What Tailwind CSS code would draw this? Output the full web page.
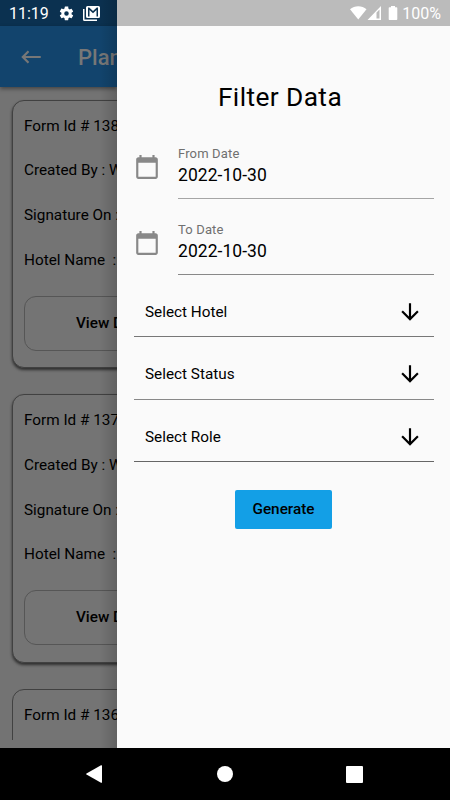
<!DOCTYPE html>
<html lang="en">
<head>
<meta charset="utf-8">
<title>Filter Data</title>
<script src="https://cdn.jsdelivr.net/npm/@tailwindcss/browser@4"></script>
</head>
<body class="bg-black">
<svg class="hidden">
  <symbol id="calendar" viewBox="0 0 24 24"><path fill="currentColor" d="M20 3h-1V1h-2v2H7V1H5v2H4c-1.1 0-2 .9-2 2v16c0 1.1.9 2 2 2h16c1.1 0 2-.9 2-2V5c0-1.1-.9-2-2-2zm0 18H4V8h16v13z"/></symbol>
  <symbol id="down" viewBox="0 0 24 24"><path fill="currentColor" d="M20 12l-1.41-1.41L13 16.17V4h-2v12.17l-5.58-5.59L4 12l8 8 8-8z"/></symbol>
</svg>
<div class="flex h-[800px] w-[450px] flex-col overflow-hidden bg-black font-[Roboto,sans-serif] text-black">
  <div class="flex h-[748px]">
    <!-- Page behind the drawer -->
    <div class="relative flex h-full w-[117px] shrink-0 flex-col overflow-hidden bg-[#737373] whitespace-nowrap">
      <div class="flex h-[26px] shrink-0 items-center bg-[#0b3150] pl-[9px] text-white">
        <span class="w-[51px] pt-[2px] text-[16px] leading-[20px]">11:19</span>
        <svg class="h-[17px] w-[17px] -ml-[2px]" viewBox="0 0 24 24"><path fill="currentColor" fill-rule="evenodd" d="M19.14 12.94c.04-.3.06-.61.06-.94s-.02-.64-.07-.94l2.03-1.58a.49.49 0 0 0 .12-.61l-1.92-3.32a.49.49 0 0 0-.59-.22l-2.39.96a7 7 0 0 0-1.62-.94l-.36-2.54A.48.48 0 0 0 13.92 2h-3.84a.48.48 0 0 0-.48.41l-.36 2.54c-.59.24-1.13.57-1.62.94l-2.39-.96a.48.48 0 0 0-.59.22L2.72 8.87a.48.48 0 0 0 .12.61l2.03 1.58a6 6 0 0 0 0 1.88l-2.03 1.58a.49.49 0 0 0-.12.61l1.92 3.32c.12.22.37.29.59.22l2.39-.96c.5.38 1.03.7 1.62.94l.36 2.54c.05.24.24.41.48.41h3.84c.24 0 .44-.17.47-.41l.36-2.54c.59-.24 1.13-.56 1.62-.94l2.39.96c.22.08.47 0 .59-.22l1.92-3.32a.48.48 0 0 0-.12-.61zM12 15.2a3.2 3.2 0 1 1 0-6.4 3.2 3.2 0 0 1 0 6.4z"/></svg>
        <svg class="ml-[8px] h-[15px] w-[17px]" viewBox="0 0 17 15"><path fill="currentColor" fill-rule="evenodd" d="M4.500 0h11A1.500 1.500 0 0 1 17 1.500v9a1.500 1.500 0 0 1-1.500 1.500h-11A1.500 1.500 0 0 1 3 10.500v-9A1.500 1.500 0 0 1 4.500 0zM5 10.500h1.500V4L10 7.200 13.500 4v6.500H15v-9h-1.200L10 5 6.200 1.500H5z"/><path fill="currentColor" d="M0 3h1.500v10.500H14V15H1.500A1.500 1.500 0 0 1 0 13.500z"/></svg>
      </div>
      <div class="relative z-10 flex h-[61px] shrink-0 items-center bg-[#12446d] pl-[18px] text-[#777] shadow-[0_2px_4px_rgba(0,0,0,0.4)]">
        <svg class="h-[26px] w-[26px] shrink-0" viewBox="0 0 24 24"><path fill="currentColor" d="M21 11H6.830l3.580-3.590L9 6l-6 6 6 6 1.410-1.410L6.830 13H21z"/></svg>
        <span class="ml-[34px] pt-[2px] text-[22px] font-medium">Planner</span>
      </div>
      <div class="flex h-[653px] shrink-0 flex-col gap-[26px] overflow-hidden pl-[12px] pt-[12.500px] text-[15.300px]">
        <div class="h-[268.500px] w-[426px] shrink-0 rounded-[12px] border border-[#414141] bg-[#747474] pl-[11px] pt-[3px] shadow-[0_2px_3px_rgba(0,0,0,0.6)]">
          <div class="h-[44.800px] leading-[44.800px]">Form Id # 138</div>
          <div class="h-[44.800px] leading-[44.800px]">Created By : W</div>
          <div class="h-[44.800px] leading-[44.800px]">Signature On :</div>
          <div class="h-[44.800px] leading-[44.800px]">Hotel Name &nbsp;:</div>
          <div class="mt-[13px] flex h-[55px] w-[188px] items-center rounded-[12px] border border-[#565656] pl-[51px] font-medium">View Details</div>
        </div>
        <div class="h-[268.500px] w-[426px] shrink-0 rounded-[12px] border border-[#414141] bg-[#747474] pl-[11px] pt-[3px] shadow-[0_2px_3px_rgba(0,0,0,0.6)]">
          <div class="h-[44.800px] leading-[44.800px]">Form Id # 137</div>
          <div class="h-[44.800px] leading-[44.800px]">Created By : W</div>
          <div class="h-[44.800px] leading-[44.800px]">Signature On :</div>
          <div class="h-[44.800px] leading-[44.800px]">Hotel Name &nbsp;:</div>
          <div class="mt-[13px] flex h-[55px] w-[188px] items-center rounded-[12px] border border-[#565656] pl-[51px] font-medium">View Details</div>
        </div>
        <div class="h-[268.500px] w-[426px] shrink-0 rounded-[12px] border border-[#414141] bg-[#747474] pl-[11px] pt-[3px]">
          <div class="h-[44.800px] leading-[44.800px]">Form Id # 136</div>
        </div>
      </div>
      <div class="absolute inset-y-0 right-0 z-20 w-[18px] bg-linear-to-r from-transparent to-black/15"></div>
    </div>

    <!-- Filter drawer -->
    <div class="flex h-full w-[333px] flex-col bg-[#fafafa]">
      <div class="flex h-[26px] shrink-0 items-center justify-end bg-[#bbb] pr-[9px] text-white">
        <svg class="h-[14px] w-[49px]" viewBox="0 0 49 14"><path fill="currentColor" d="M0 3.300C4.500-.9 12-.9 16.500 3.300L8.250 13.500z"/><path fill="currentColor" fill-rule="evenodd" d="M31 0v14H17.500zM29.500 3.500L26.500 6.500V12.500h3z"/><path fill="currentColor" d="M41 0h4v1.300h1.500q.8 0 .8.800v11.100q0 .8-.8.800h-7q-.8 0-.8-.8V2.100q0-.8.8-.8H41z"/></svg>
        <span class="ml-[3px] pt-[2px] text-[16px] leading-[20px]">100%</span>
      </div>
      <h1 class="mt-[53px] h-[36px] pr-[7px] text-center text-[26.300px] leading-[36px] tracking-[0.400px]">Filter Data</h1>
      <div class="mt-[23px] flex flex-col pr-[16px] pl-[17px]">
        <div class="flex h-[61px]">
          <svg class="mt-[16px] mr-[18px] h-[26px] w-[26px] text-[#888]"><use href="#calendar"/></svg>
          <div class="flex-1 border-b border-[#a5a5a5] pt-[8px]">
            <div class="text-[13px] leading-[16px] tracking-[0.150px] text-[#707070]">From Date</div>
            <div class="pt-[2px] text-[17.500px] leading-[22px] tracking-[0.050px]">2022-10-30</div>
          </div>
        </div>
        <div class="mt-[15px] flex h-[61px]">
          <svg class="mt-[15.500px] mr-[18px] h-[26px] w-[26px] text-[#888]"><use href="#calendar"/></svg>
          <div class="flex-1 border-b border-[#888] pt-[8px]">
            <div class="text-[13px] leading-[16px] tracking-[0.150px] text-[#707070]">To Date</div>
            <div class="pt-[2px] text-[17.500px] leading-[22px] tracking-[0.050px]">2022-10-30</div>
          </div>
        </div>
        <div class="mt-[12px] flex h-[50px] items-center justify-between border-b border-[#777] pr-[11.500px] pl-[11px] text-[15.300px]">
          <span class="pt-[2px]">Select Hotel</span>
          <svg class="h-[26px] w-[26px]"><use href="#down"/></svg>
        </div>
        <div class="mt-[12.500px] flex h-[50px] items-center justify-between border-b border-[#888] pr-[11.500px] pl-[11px] text-[15.300px]">
          <span class="pt-[1px]">Select Status</span>
          <svg class="h-[26px] w-[26px]"><use href="#down"/></svg>
        </div>
        <div class="mt-[12.500px] flex h-[50px] items-center justify-between border-b border-[#666] pr-[11.500px] pl-[11px] text-[15.300px]">
          <span class="pt-[2px]">Select Role</span>
          <svg class="h-[26px] w-[26px]"><use href="#down"/></svg>
        </div>
        <button class="mt-[28px] mr-[1px] h-[39px] w-[97px] self-center rounded-[2px] bg-[#139fe6] text-[15.300px] font-medium">Generate</button>
      </div>
    </div>
  </div>

  <!-- System navigation -->
  <div class="flex h-[52px] items-center text-white">
    <svg class="ml-[86px] h-[18px] w-[16px]" viewBox="0 0 16 18"><path fill="currentColor" d="M15 .3q1-.5 1 .5v16.400q0 1-1 .5L.5 9.500Q-.2 9 .5 8.500z"/></svg>
    <span class="ml-[115px] size-[16px] rounded-full bg-white"></span>
    <span class="ml-[113px] size-[17px] rounded-[1px] bg-white"></span>
  </div>
</div>
</body>
</html>
